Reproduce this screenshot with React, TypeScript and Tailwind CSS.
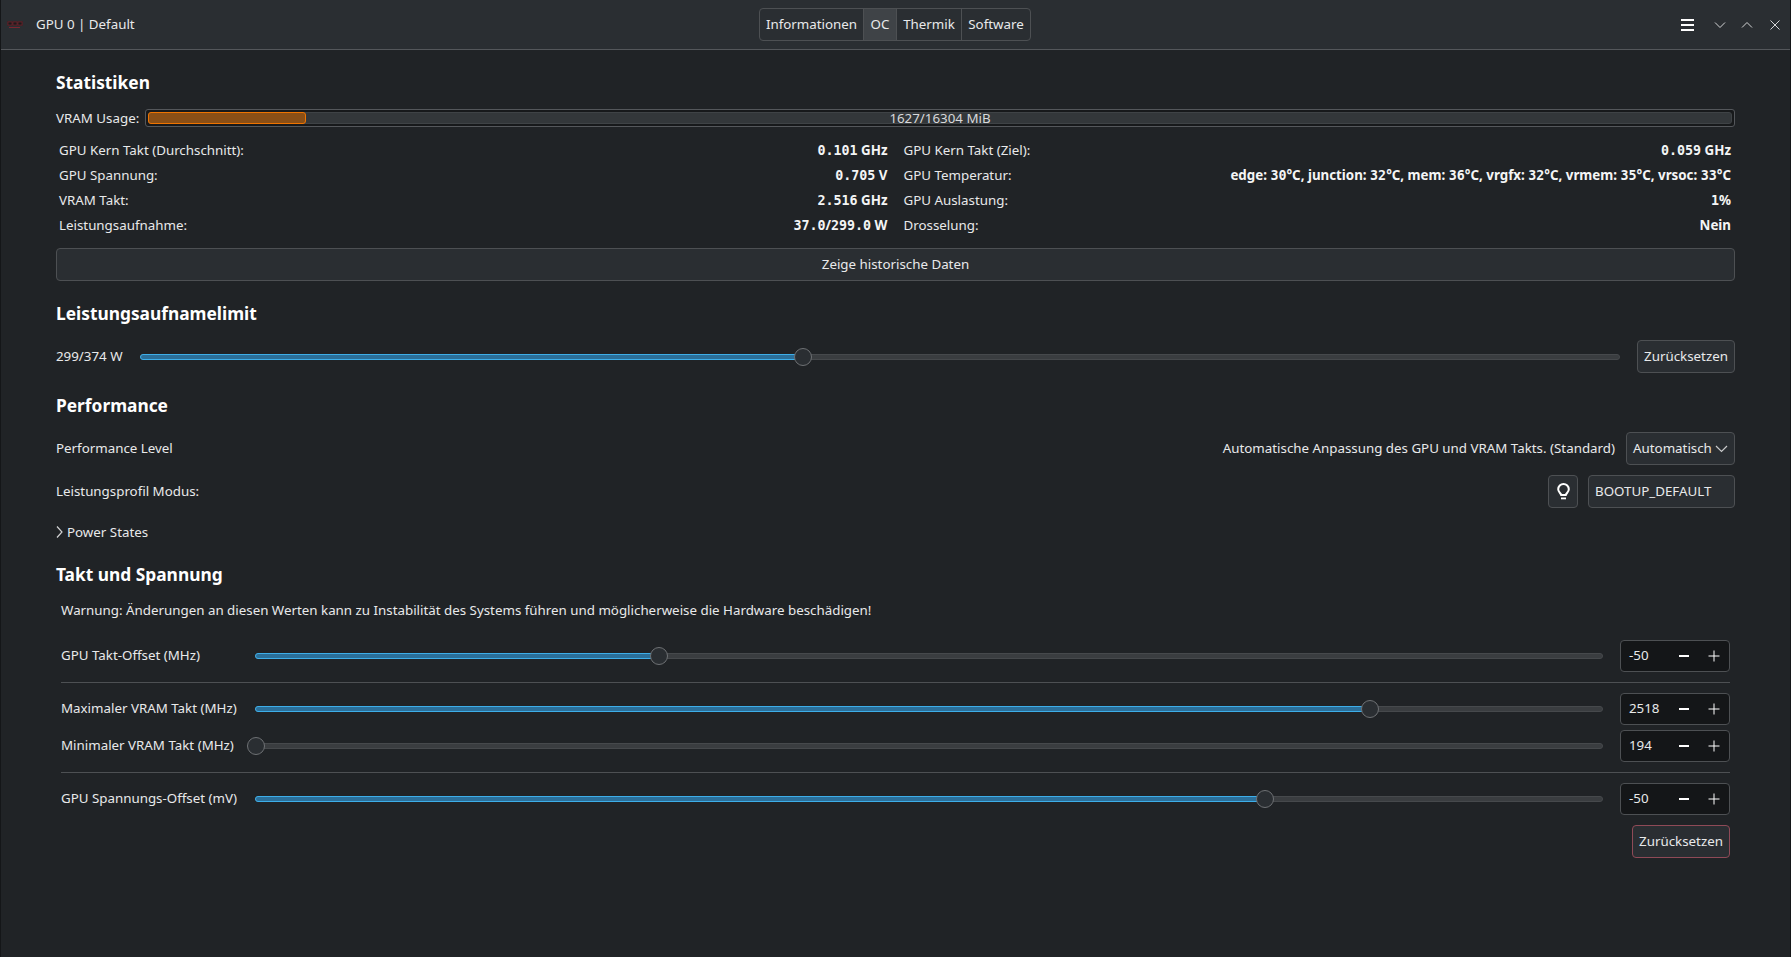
import React from 'react';

const stats = [
  ['GPU Kern Takt (Durchschnitt):', '0.101 GHz', 'GPU Kern Takt (Ziel):', '0.059 GHz'],
  ['GPU Spannung:', '0.705 V', 'GPU Temperatur:', 'edge: 30°C, junction: 32°C, mem: 36°C, vrgfx: 32°C, vrmem: 35°C, vrsoc: 33°C'],
  ['VRAM Takt:', '2.516 GHz', 'GPU Auslastung:', '1%'],
  ['Leistungsaufnahme:', '37.0/299.0 W', 'Drosselung:', 'Nein'],
];

function Title({ children, className }: { children: React.ReactNode; className: string }) {
  return <h2 className={`h-6 flex items-center text-[17.33px] font-bold text-white ${className}`}>{children}</h2>;
}

// numbers in the stats are set in a monospaced face, units are not
function Value({ text }: { text: string }) {
  return (
    <b className="h-[22px] font-bold text-[#f4f5f5] whitespace-pre">
      {text.split(/([0-9.]+)/).map((part, i) =>
        i % 2 === 1 ? (
          <span key={i} className="font-['DejaVu_Sans_Mono',monospace] text-[13.33px] leading-none">{part}</span>
        ) : (
          <span key={i}>{part}</span>
        )
      )}
    </b>
  );
}

function Slider({ percent }: { percent: number }) {
  return (
    <div className="relative flex-1 h-[6px] rounded-full bg-[#3a3d40] border border-[#46494c]">
      {percent > 0 && (
        <div className="absolute -left-px -top-px h-[6px] rounded-l-full bg-[#2b6f99] border border-[#3daee9]" style={{ width: `${percent}%` }} />
      )}
      <div
        className="absolute top-1/2 -translate-x-1/2 -translate-y-1/2 w-[18px] h-[18px] rounded-full bg-[#2a2e32] border border-[#6e7174]"
        style={{ left: `${percent}%` }}
      />
    </div>
  );
}

function SpinBox({ value }: { value: number }) {
  return (
    <div className="w-[110px] h-8 flex items-center rounded-[4px] bg-[#141618] border border-[#4d5053] pl-2">
      <span className="w-[49px] pb-[2px]">{value}</span>
      <svg width="12" height="12" viewBox="0 0 12 12" className="text-white">
        <rect x="1" y="5" width="10" height="2" fill="currentColor" />
      </svg>
      <svg width="12" height="12" viewBox="0 0 12 12" className="ml-[18px] text-white">
        <path d="M0.5 6h11M6 0.5v11" stroke="currentColor" strokeWidth="1" fill="none" />
      </svg>
    </div>
  );
}

function TuneRow({ label, percent, value, className }: { label: string; percent: number; value: number; className: string }) {
  return (
    <div className={`flex items-center ${className}`}>
      <span className="w-[194px] pb-[2px]">{label}</span>
      <Slider percent={percent} />
      <div className="ml-[17px]">
        <SpinBox value={value} />
      </div>
    </div>
  );
}

const btn = 'flex items-center rounded-[4px] bg-[#2a2e32] border border-[#4d5053] pb-[2px]';

export default function App() {
  return (
    <div className="w-full h-[957px] overflow-hidden bg-[#202326] border-x border-[#141618] text-[13.33px] leading-5 text-[#e8e9ea] font-['Noto_Sans',sans-serif]">
      {/* Header bar */}
      <header className="relative h-[50px] flex items-center justify-between bg-[#2a2e32] border-b border-[#54575b] pl-[6px] pr-[10px]">
        <div className="flex items-center">
          <svg width="16" height="9" viewBox="0 0 16 9">
            <rect x="0" y="1" width="16" height="5" fill="#3a2226" />
            <rect x="1" y="2" width="4" height="3" fill="#1d1a1c" stroke="#7a2630" strokeWidth="0.6" />
            <rect x="6" y="2" width="4" height="3" fill="#1d1a1c" stroke="#7a2630" strokeWidth="0.6" />
            <rect x="11" y="2" width="4" height="3" fill="#1d1a1c" stroke="#7a2630" strokeWidth="0.6" />
            <rect x="2" y="7" width="11" height="1" fill="#7a2630" />
          </svg>
          <span className="ml-[13px] pb-[2px]">GPU 0 | Default</span>
        </div>
        <div className="absolute left-[758px] top-2 h-[33px] flex rounded-[4px] border border-[#4d5053] divide-x divide-[#4d5053] overflow-hidden">
          <div className="w-[104px] pb-[2px] flex items-center justify-center">Informationen</div>
          <div className="w-[33px] pb-[2px] flex items-center justify-center bg-[#3f4347]">OC</div>
          <div className="w-[65px] pb-[2px] flex items-center justify-center">Thermik</div>
          <div className="w-[68px] pb-[2px] flex items-center justify-center">Software</div>
        </div>
        <div className="flex items-center text-[#d4d5d6]">
          <svg width="13" height="12" viewBox="0 0 13 12" className="text-white">
            <path d="M0 0h13v2H0zM0 5h13v2H0zM0 10h13v2H0z" fill="currentColor" />
          </svg>
          <svg width="12" height="8" viewBox="0 0 12 8" className="ml-[20px]">
            <path d="M1 1.5l5 5 5-5" stroke="currentColor" fill="none" />
          </svg>
          <svg width="12" height="8" viewBox="0 0 12 8" className="ml-[15px]">
            <path d="M1 6.5l5-5 5 5" stroke="currentColor" fill="none" />
          </svg>
          <svg width="10" height="10" viewBox="0 0 10 10" className="ml-[17px]">
            <path d="M0.5 0.5l9 9M9.5 0.5l-9 9" stroke="currentColor" fill="none" />
          </svg>
        </div>
      </header>

      <main className="flex flex-col px-[55px]">
        {/* Statistiken */}
        <Title className="mt-5">Statistiken</Title>
        <div className="mt-[15px] h-[18px] flex items-center">
          <span className="w-[89px]">VRAM Usage:</span>
          <div className="relative flex-1 h-[18px] p-[2px] rounded-[3px] bg-[#17191b] border border-[#54575b]">
            <div className="relative h-full rounded-[3px] bg-[#33373a] border border-[#3f4346]">
              <div className="absolute -left-px -top-px -bottom-px w-[158px] rounded-[3px] bg-[#8a4f16] border border-[#ef7400]" />
              <div className="absolute inset-0 flex items-center justify-center text-[#d8d9da]">1627/16304 MiB</div>
            </div>
          </div>
        </div>
        <div className="mt-[11px] grid grid-cols-2 gap-x-4 pl-[3px] pr-[3px]">
          {stats.map((row) => (
            <React.Fragment key={row[0]}>
              <div className="h-[25px] flex items-center justify-between">
                <span className="pb-[2px]">{row[0]}</span>
                <Value text={row[1]} />
              </div>
              <div className="h-[25px] pr-px flex items-center justify-between">
                <span className="pb-[2px]">{row[2]}</span>
                <Value text={row[3]} />
              </div>
            </React.Fragment>
          ))}
        </div>
        <div className={`${btn} mt-[10px] h-[33px] justify-center`}>Zeige historische Daten</div>

        {/* Leistungsaufnamelimit */}
        <Title className="mt-5">Leistungsaufnamelimit</Title>
        <div className="mt-[15px] h-[33px] flex items-center">
          <span className="w-[84px] pb-[2px]">299/374 W</span>
          <Slider percent={44.8} />
          <div className={`${btn} ml-[17px] w-[98px] h-[33px] justify-center`}>Zurücksetzen</div>
        </div>

        {/* Performance */}
        <Title className="mt-5">Performance</Title>
        <div className="mt-[15px] h-[33px] flex items-center justify-between">
          <span className="pb-[2px]">Performance Level</span>
          <div className="flex items-center">
            <span className="pb-[2px]">Automatische Anpassung des GPU und VRAM Takts. (Standard)</span>
            <div className={`${btn} ml-[11px] w-[109px] h-[33px] pl-[6px]`}>
              <span>Automatisch</span>
              <svg width="13" height="8" viewBox="0 0 13 8" className="ml-[3px] mt-[2px] text-[#c9cacb]">
                <path d="M1 1l5.5 5.5L12 1" stroke="currentColor" strokeWidth="1.2" fill="none" />
              </svg>
            </div>
          </div>
        </div>
        <div className="mt-[10px] h-[33px] flex items-center justify-between">
          <span className="pb-[2px]">Leistungsprofil Modus:</span>
          <div className="flex items-center">
            <div className={`${btn} w-[30px] h-[33px] justify-center`}>
              <svg width="13" height="18" viewBox="0 0 13 18" className="mt-[2px] text-white">
                <path d="M4.2 12C3.9 10.2 1.2 9.2 1.2 6.3a5.3 5.3 0 0 1 10.6 0c0 2.9-2.7 3.9-3 5.7z" stroke="currentColor" strokeWidth="2" fill="none" />
                <rect x="4" y="14.5" width="5" height="1.8" fill="currentColor" />
              </svg>
            </div>
            <div className={`${btn} ml-[10px] w-[147px] h-[33px] pl-[6px]`}>BOOTUP_DEFAULT</div>
          </div>
        </div>
        <div className="mt-3 h-6 flex items-center">
          <svg width="7" height="12" viewBox="0 0 7 12" className="text-[#d0d1d2]">
            <path d="M1 0.5l5 5.5-5 5.5" stroke="currentColor" strokeWidth="1.2" fill="none" />
          </svg>
          <span className="ml-1">Power States</span>
        </div>

        {/* Takt und Spannung */}
        <Title className="mt-[18px]">Takt und Spannung</Title>
        <div className="flex flex-col pl-[5px] pr-[5px]">
          <p className="mt-[14px] h-5">Warnung: Änderungen an diesen Werten kann zu Instabilität des Systems führen und möglicherweise die Hardware beschädigen!</p>
          <TuneRow className="mt-5" label="GPU Takt-Offset (MHz)" percent={29.95} value={-50} />
          <div className="mt-[10px] h-px bg-[#4d5053]" />
          <TuneRow className="mt-[10px]" label="Maximaler VRAM Takt (MHz)" percent={82.75} value={2518} />
          <TuneRow className="mt-[5px]" label="Minimaler VRAM Takt (MHz)" percent={0} value={194} />
          <div className="mt-[10px] h-px bg-[#4d5053]" />
          <TuneRow className="mt-[10px]" label="GPU Spannungs-Offset (mV)" percent={74.95} value={-50} />
          <div className="mt-[10px] self-end w-[98px] h-[33px] pb-[2px] flex items-center justify-center rounded-[4px] bg-[#2a2e32] border border-[#8f4a57]">Zurücksetzen</div>
        </div>
      </main>
    </div>
  );
}
